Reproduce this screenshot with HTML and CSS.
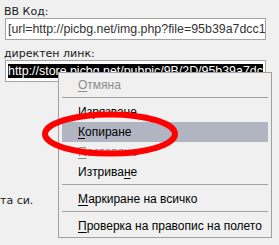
FILE: index.html
```html
<!DOCTYPE html>
<html lang="bg">
<head>
    <meta charset="UTF-8">
    <title>Линкове</title>
    <link rel="stylesheet" href="styles.css">
</head>
<body>
<div id="links">
    <div class="label">BB Код:</div>
    <div class="box first">[url=http://picbg.net/img.php?file=95b39a7dcc1</div>
    <div class="label">директен линк:</div>
    <div class="box"><span class="sel">http://store.picbg.net/pubpic/9B/2D/95b39a7dc</span></div>
    <p class="note">та си.</p>
</div>

<ul id="menu">
    <li class="off"><u>О</u>тмяна</li>
    <li class="sep"></li>
    <li><u>И</u>зрязване</li>
    <li class="hover"><u>К</u>опиране</li>
    <li class="off"><u>П</u>оставяне</li>
    <li>Изтрива<u>н</u>е</li>
    <li class="sep"></li>
    <li><u>М</u>аркиране на всичко</li>
    <li class="sep"></li>
    <li><u>П</u>роверка на правопис на полето</li>
</ul>

<svg id="circle" width="140" height="50" viewBox="0 0 140 50">
    <ellipse cx="70" cy="24" rx="65" ry="19.5" fill="none" stroke="#ff0000" stroke-width="6"/>
</svg>
</body>
</html>
```

FILE: styles.css
```css
* {
    padding: 0;
    margin: 0;
}

body {
    background: #f0f0f0;
    font-family: "DejaVu Sans", Tahoma, sans-serif;
    font-size: 11px;
    color: #1a1a1a;
    overflow: hidden;
}

#links {
    padding: 5px 0 0 4px;
}

.label {
    line-height: 13px;
}

.box {
    width: 257px;
    height: 20px;
    margin-left: 1px;
    border: 1px solid #a3a3a3;
    background: #fff;
    font-family: "Liberation Sans", Arial, sans-serif;
    font-size: 12.4px;
    line-height: 20px;
    padding-left: 2px;
    white-space: nowrap;
    overflow: hidden;
    color: #333;
}

.box.first {
    margin-bottom: 7px;
}

.sel {
    background: #000;
    color: #fff;
}

.note {
    margin: 112px 0 0 -4px;
    line-height: 13px;
}

li {
    list-style: none;
}

#menu {
    position: absolute;
    left: 58px;
    top: 72px;
    width: 206px;
    padding: 2px 3px 1px;
    border: 1px solid #a0a0a0;
    background: #f0f0f0;
    font-family: "Liberation Sans", "Segoe UI", sans-serif;
    font-size: 12px;
    color: #000;
}

#menu li {
    height: 20px;
    line-height: 20px;
    padding-left: 16px;
    white-space: nowrap;
}

#menu u {
    text-decoration-thickness: 1px;
    text-underline-offset: 2px;
}

#menu .off {
    color: #8d8d8d;
}

#menu .hover {
    background: #b1b4c1;
}

#menu .sep {
    height: 1px;
    padding: 0;
    margin: 2px 0 4px;
    background: #a0a0a0;
}

#circle {
    position: absolute;
    left: 40px;
    top: 110px;
}
```
